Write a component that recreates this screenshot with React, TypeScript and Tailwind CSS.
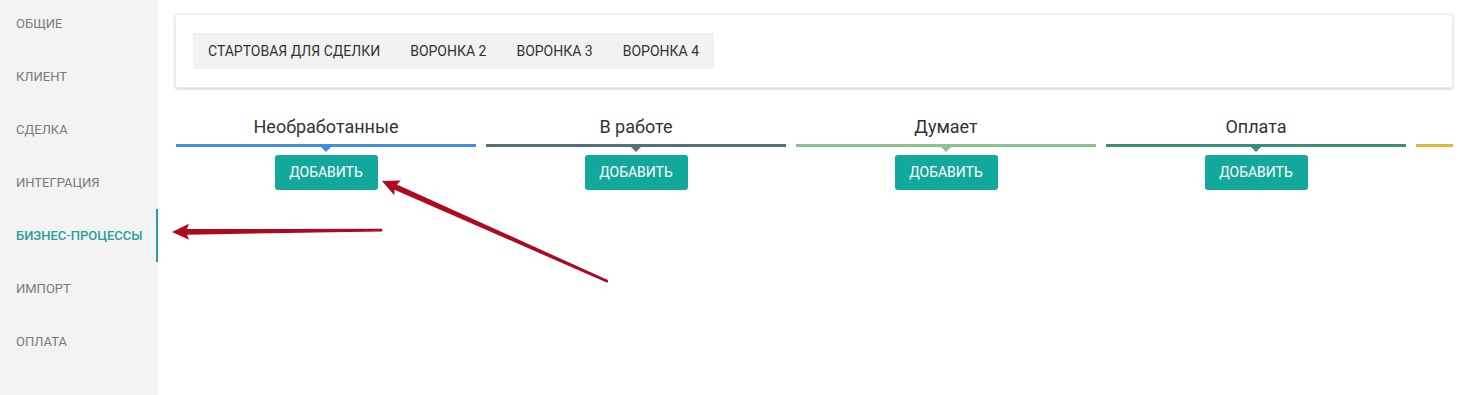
import React from "react";

const menu = ["Общие", "Клиент", "Сделка", "Интеграция", "Бизнес-процессы", "Импорт", "Оплата"];
const funnels = ["Стартовая для сделки", "Воронка 2", "Воронка 3", "Воронка 4"];

const stages = [
  { title: "Необработанные", line: "bg-[#3f8fdf]", tri: "border-t-[#3f8fdf]" },
  { title: "В работе", line: "bg-[#546e7a]", tri: "border-t-[#546e7a]" },
  { title: "Думает", line: "bg-[#8cc490]", tri: "border-t-[#8cc490]" },
  { title: "Оплата", line: "bg-[#3a8f79]", tri: "border-t-[#3a8f79]" },
  { title: "", line: "bg-[#e0b63c]", tri: "" },
];

function Arrow({ x, y, len, angle }: { x: number; y: number; len: number; angle: number }) {
  // tip at (0,0), shaft runs along +x to the tail
  return (
    <g transform={`translate(${x} ${y}) rotate(${angle})`} fill="#ad0a20">
      <polygon points={`0,0 17,-8 15,-2.8 ${len},-1.4 ${len},1.4 15,2.8 17,8`} />
      <circle cx={len} cy={0} r={1.4} />
    </g>
  );
}

export default function App() {
  const active = "Бизнес-процессы";
  return (
    <div className="relative flex h-[395px] w-full overflow-hidden bg-white font-['Roboto',sans-serif]">
      <aside className="h-full w-[158px] shrink-0 bg-[#f2f3f2]">
        <ul className="-mt-[3px]">
          {menu.map((m) => (
            <li
              key={m}
              className={`flex h-[53px] items-center pl-[16px] text-[13px] uppercase ${
                m === active ? "border-r-2 border-[#26a196] font-medium text-[#26a196]" : "text-[#7a7a7a]"
              }`}
            >
              {m}
            </li>
          ))}
        </ul>
      </aside>

      <main className="min-w-0 flex-1 pl-[17px] pr-[16px] pt-[14px]">
        <div className="rounded-[2px] border border-[#ececec] bg-white px-[17px] py-[18px] shadow-[0_1px_3px_rgba(0,0,0,0.2)]">
          <div className="inline-flex h-[36px] items-center bg-[#f1f2f2]">
            {funnels.map((f) => (
              <button key={f} className="px-[15px] text-[14px] uppercase text-[#333]">
                {f}
              </button>
            ))}
          </div>
        </div>

        <div className="mt-[27px] flex gap-[10px] overflow-hidden pl-[1px]">
          {stages.map((s, i) => (
            <div key={i} className="flex w-[300px] shrink-0 flex-col items-center">
              <div className="h-[24px] text-[18px] leading-[24px] text-[#333]">{s.title}</div>
              <div className={`mt-[5px] h-[3px] w-full ${s.line}`} />
              {s.title && (
                <>
                  <div className={`h-0 w-0 border-x-[5px] border-t-[5px] border-x-transparent ${s.tri}`} />
                  <button className="mt-[3px] h-[35px] w-[103px] rounded-[3px] bg-[#12a89b] text-[14px] uppercase text-white">
                    Добавить
                  </button>
                </>
              )}
            </div>
          ))}
        </div>
      </main>

      <svg className="pointer-events-none absolute left-0 top-0" width="1469" height="395">
        <Arrow x={172} y={232} len={209} angle={-0.5} />
        <Arrow x={382} y={181} len={246} angle={24} />
      </svg>
    </div>
  );
}
